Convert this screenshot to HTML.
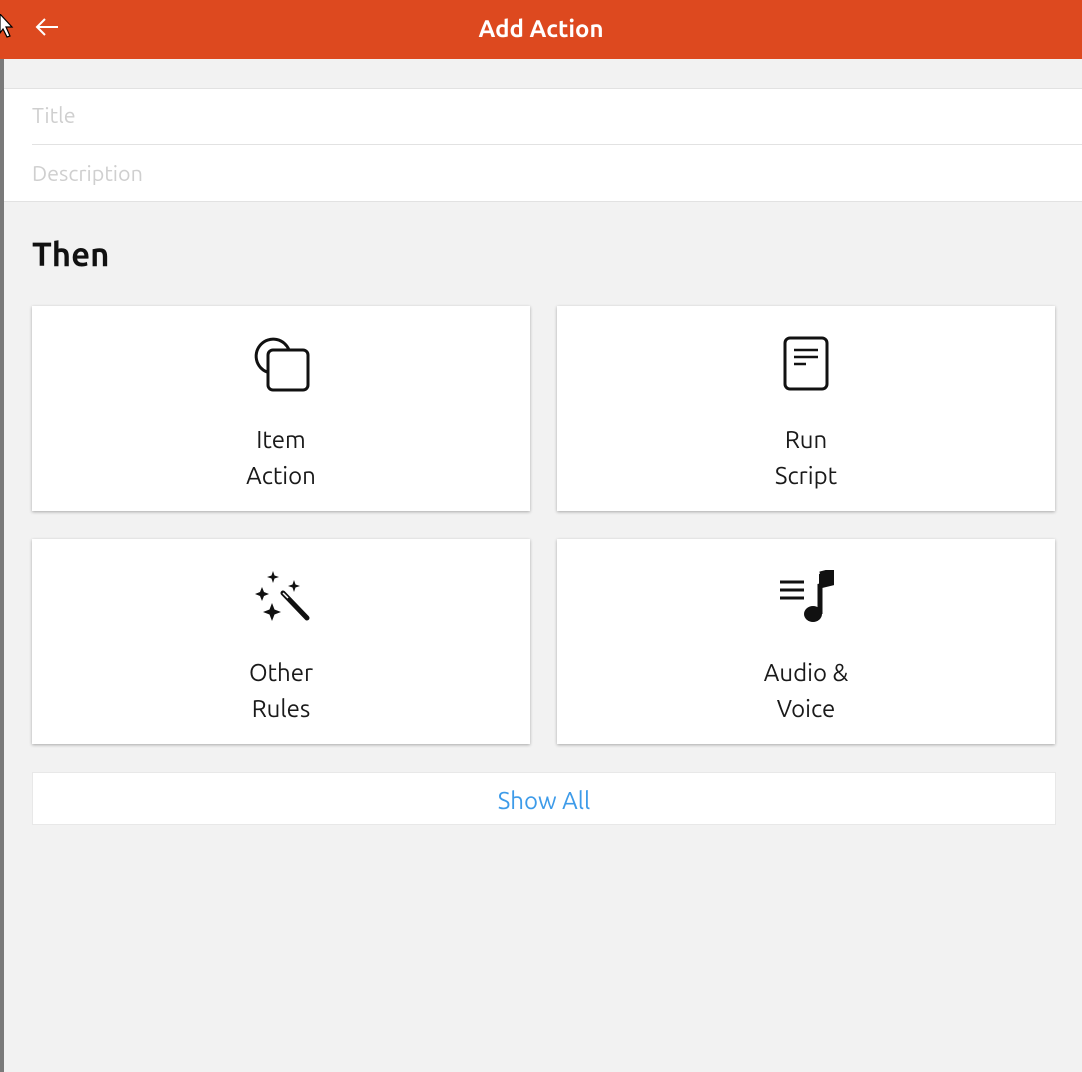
<!DOCTYPE html>
<html><head><meta charset="utf-8"><style>
*{box-sizing:border-box;margin:0;padding:0}
body{width:1082px;height:1072px;background:#f2f2f2;font-family:"Ubuntu","Liberation Sans","DejaVu Sans",sans-serif;position:relative;overflow:hidden}
.hdr{position:absolute;left:0;top:0;width:1082px;height:59px;background:#dd491f;color:#fff;font-weight:bold;font-size:24px;text-align:center;line-height:57px}
.edge{position:absolute;left:0;top:59px;width:4px;height:1013px;background:#7a7a7a}
.form{position:absolute;left:4px;top:88px;width:1078px;height:114px;background:#fff;border-top:1px solid #e2e2e2;border-bottom:1px solid #e2e2e2}
.f{position:absolute;left:28px;color:#cfcfcf;font-size:21.5px}
.div{position:absolute;left:28px;right:0;top:55px;height:1px;background:#e2e2e2}
h2{position:absolute;left:32px;top:236px;font-size:33px;font-weight:bold;color:#111}
.card{position:absolute;width:498px;height:205px;background:#fff;box-shadow:0 1px 3px rgba(0,0,0,.3);text-align:center}
.card svg{position:absolute;left:50%;transform:translateX(-50%);top:26px}
.lbl{position:absolute;left:0;right:0;top:116px;font-size:24px;line-height:36px;color:#1a1a1a}
.show{position:absolute;left:32px;top:772px;width:1024px;height:53px;background:#fff;border:1px solid #e8e8e8;color:#3d9be9;font-size:24px;text-align:center;line-height:56px}
</style></head><body>
<div class="hdr">Add Action</div>
<svg style="position:absolute;left:34px;top:16px" width="26" height="22" viewBox="0 0 26 22"><path d="M24 11H3M11 3L3 11L11 19" stroke="#fff" stroke-width="2" fill="none"/></svg>
<div class="edge"></div>
<div class="form"><div class="f" style="top:15px">Title</div><div class="div"></div><div class="f" style="top:73px">Description</div></div>
<h2>Then</h2>
<div class="card" style="left:32px;top:306px">
<svg width="60" height="60" viewBox="0 0 60 60" style="top:28px"><path d="M16 38 A17 17 0 1 1 38 16" fill="none" stroke="#111" stroke-width="3"/><rect x="17" y="16" width="40" height="40" rx="5" fill="none" stroke="#111" stroke-width="3"/></svg>
<div class="lbl">Item<br>Action</div></div>
<div class="card" style="left:557px;top:306px">
<svg width="48" height="58" viewBox="0 0 48 58" style="top:29px"><rect x="3" y="3" width="42" height="51" rx="5" fill="none" stroke="#111" stroke-width="3"/><path d="M12 15H36M12 22H36M12 29H24" stroke="#111" stroke-width="2.5"/></svg>
<div class="lbl">Run<br>Script</div></div>
<div class="card" style="left:32px;top:539px">
<svg width="60" height="56" viewBox="0 0 60 56" style="top:30px"><g fill="#111"><path d="M22 2l1.5 4.5 4.5 1.5-4.5 1.5L22 14l-1.5-4.5L16 8l4.5-1.5z"/><path d="M43 11l1.5 4.5 4.5 1.5-4.5 1.5L43 23l-1.5-4.5L37 17l4.5-1.5z"/><path d="M11 18l2 5 5 2-5 2-2 5-2-5-5-2 5-2z"/><path d="M21 34l2.5 6.5 6.5 2.5-6.5 2.5L21 52l-2.5-6.5L12 43l6.5-2.5z"/></g><path d="M32 24L56 49" stroke="#111" stroke-width="5" stroke-linecap="round"/><path d="M32 24L37 29" stroke="#fff" stroke-width="1.5"/></svg>
<div class="lbl">Other<br>Rules</div></div>
<div class="card" style="left:557px;top:539px">
<svg width="56" height="54" viewBox="0 0 56 54" style="top:31px"><path d="M2 12H26M2 20H26M2 28H26" stroke="#111" stroke-width="3"/><path d="M42 4L54 1V13L42 16V44" stroke="#111" stroke-width="5" fill="none"/><path d="M41 4L55 0V13L41 17z" fill="#111"/><ellipse cx="35" cy="44" rx="9" ry="8" fill="#111"/></svg>
<div class="lbl">Audio &amp;<br>Voice</div></div>
<div class="show">Show All</div>
<svg style="position:absolute;left:0;top:14px" width="14" height="36" viewBox="0 0 14 36"><path d="M0 0L12 13H6L10 22L7 23L3 15L0 19z" fill="#fff" stroke="#000" stroke-width="1.2"/></svg>
</body></html>
